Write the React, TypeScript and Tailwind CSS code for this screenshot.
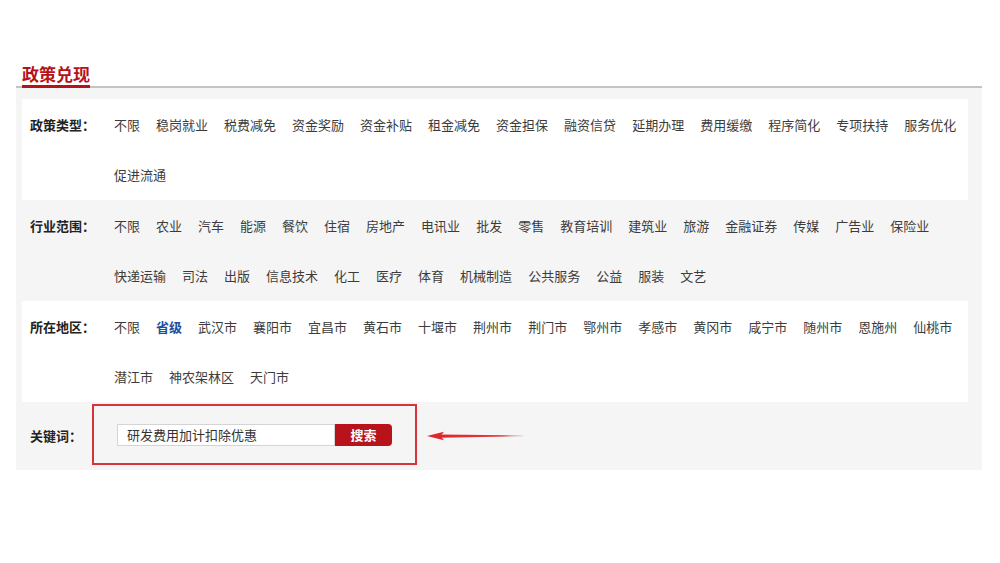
const policyTypes = [
  "不限", "稳岗就业", "税费减免", "资金奖励", "资金补贴", "租金减免", "资金担保",
  "融资信贷", "延期办理", "费用缓缴", "程序简化", "专项扶持", "服务优化", "促进流通",
];

const industries = [
  "不限", "农业", "汽车", "能源", "餐饮", "住宿", "房地产", "电讯业", "批发", "零售",
  "教育培训", "建筑业", "旅游", "金融证券", "传媒", "广告业", "保险业", "快递运输",
  "司法", "出版", "信息技术", "化工", "医疗", "体育", "机械制造", "公共服务", "公益",
  "服装", "文艺",
];

const regions = [
  "不限", "省级", "武汉市", "襄阳市", "宜昌市", "黄石市", "十堰市", "荆州市", "荆门市",
  "鄂州市", "孝感市", "黄冈市", "咸宁市", "随州市", "恩施州", "仙桃市", "潜江市",
  "神农架林区", "天门市",
];

type FilterRowProps = {
  label: string;
  items: string[];
  active?: string;
  white?: boolean;
};

const FilterRow = ({ label, items, active, white }: FilterRowProps) => {
  return (
    <div className={`flex pt-px leading-[50px] ${white ? "bg-white mr-[14px]" : "bg-[#f5f5f5]"}`}>
      <div className="w-[92px] shrink-0 pl-[8px] font-bold text-[#222]">{label}</div>
      <div className="flex flex-wrap gap-x-4 pr-2">
        {items.map((item) => (
          <a
            key={item}
            className={
              item === active
                ? "font-bold text-[#1d4f9c] cursor-pointer"
                : "text-[#3c3c3c] cursor-pointer"
            }
          >
            {item}
          </a>
        ))}
      </div>
    </div>
  );
};

const Arrow = () => (
  <svg width="98" height="10" viewBox="0 0 98 10">
    <defs>
      <linearGradient id="shaft" x1="0" x2="1" y1="0" y2="0">
        <stop offset="0" stopColor="#e0262b" />
        <stop offset="0.75" stopColor="#e23a3e" />
        <stop offset="1" stopColor="#bbbbbb" stopOpacity="0.6" />
      </linearGradient>
    </defs>
    <polygon points="12,3.4 96,4.4 96,5.2 12,6.8" fill="url(#shaft)" />
    <polygon points="0,5 17,0.8 13.5,5 17,9.2" fill="#e0262b" />
  </svg>
);

const App = () => {
  return (
    <div
      className="min-h-[563px] bg-white pl-[16px] pr-[18px] pt-[62px] text-[13px]"
      style={{ fontFamily: '"Noto Sans CJK SC", "Noto Sans", sans-serif' }}
    >
      {/* title */}
      <div className="border-b-2 border-[#c4c4c4] pl-[6px]">
        <h2 className="inline-block border-b-[3px] border-[#b5121b] text-[17px] font-bold leading-[23px] text-[#b5121b] -mb-[2px]">
          政策兑现
        </h2>
      </div>

      <div className="bg-[#f5f5f5] pt-[11px] pl-[6px]">
        <FilterRow label="政策类型：" items={policyTypes} white />
        <FilterRow label="行业范围：" items={industries} />
        <FilterRow label="所在地区：" items={regions} active="省级" white />

        {/* keyword */}
        <div className="flex h-[68px] items-start pt-[2px]">
          <div className="w-[70px] shrink-0 pl-[8px] pt-[22px] font-bold text-[#222]">关键词：</div>
          <div className="flex h-[61px] w-[325px] items-center border-2 border-[#d8333a] pl-[23px]">
            <input
              className="h-[22px] w-[218px] border border-[#d4d4d4] bg-white pl-[9px] text-[13px] text-[#333] outline-none"
              defaultValue="研发费用加计扣除优惠"
            />
            <button className="h-[22px] w-[57px] rounded-r-[4px] bg-[#b8121b] text-[13px] font-bold text-white">
              搜索
            </button>
          </div>
          <div className="ml-[10px] pt-[27px]">
            <Arrow />
          </div>
        </div>
      </div>
    </div>
  );
};

export default App;
